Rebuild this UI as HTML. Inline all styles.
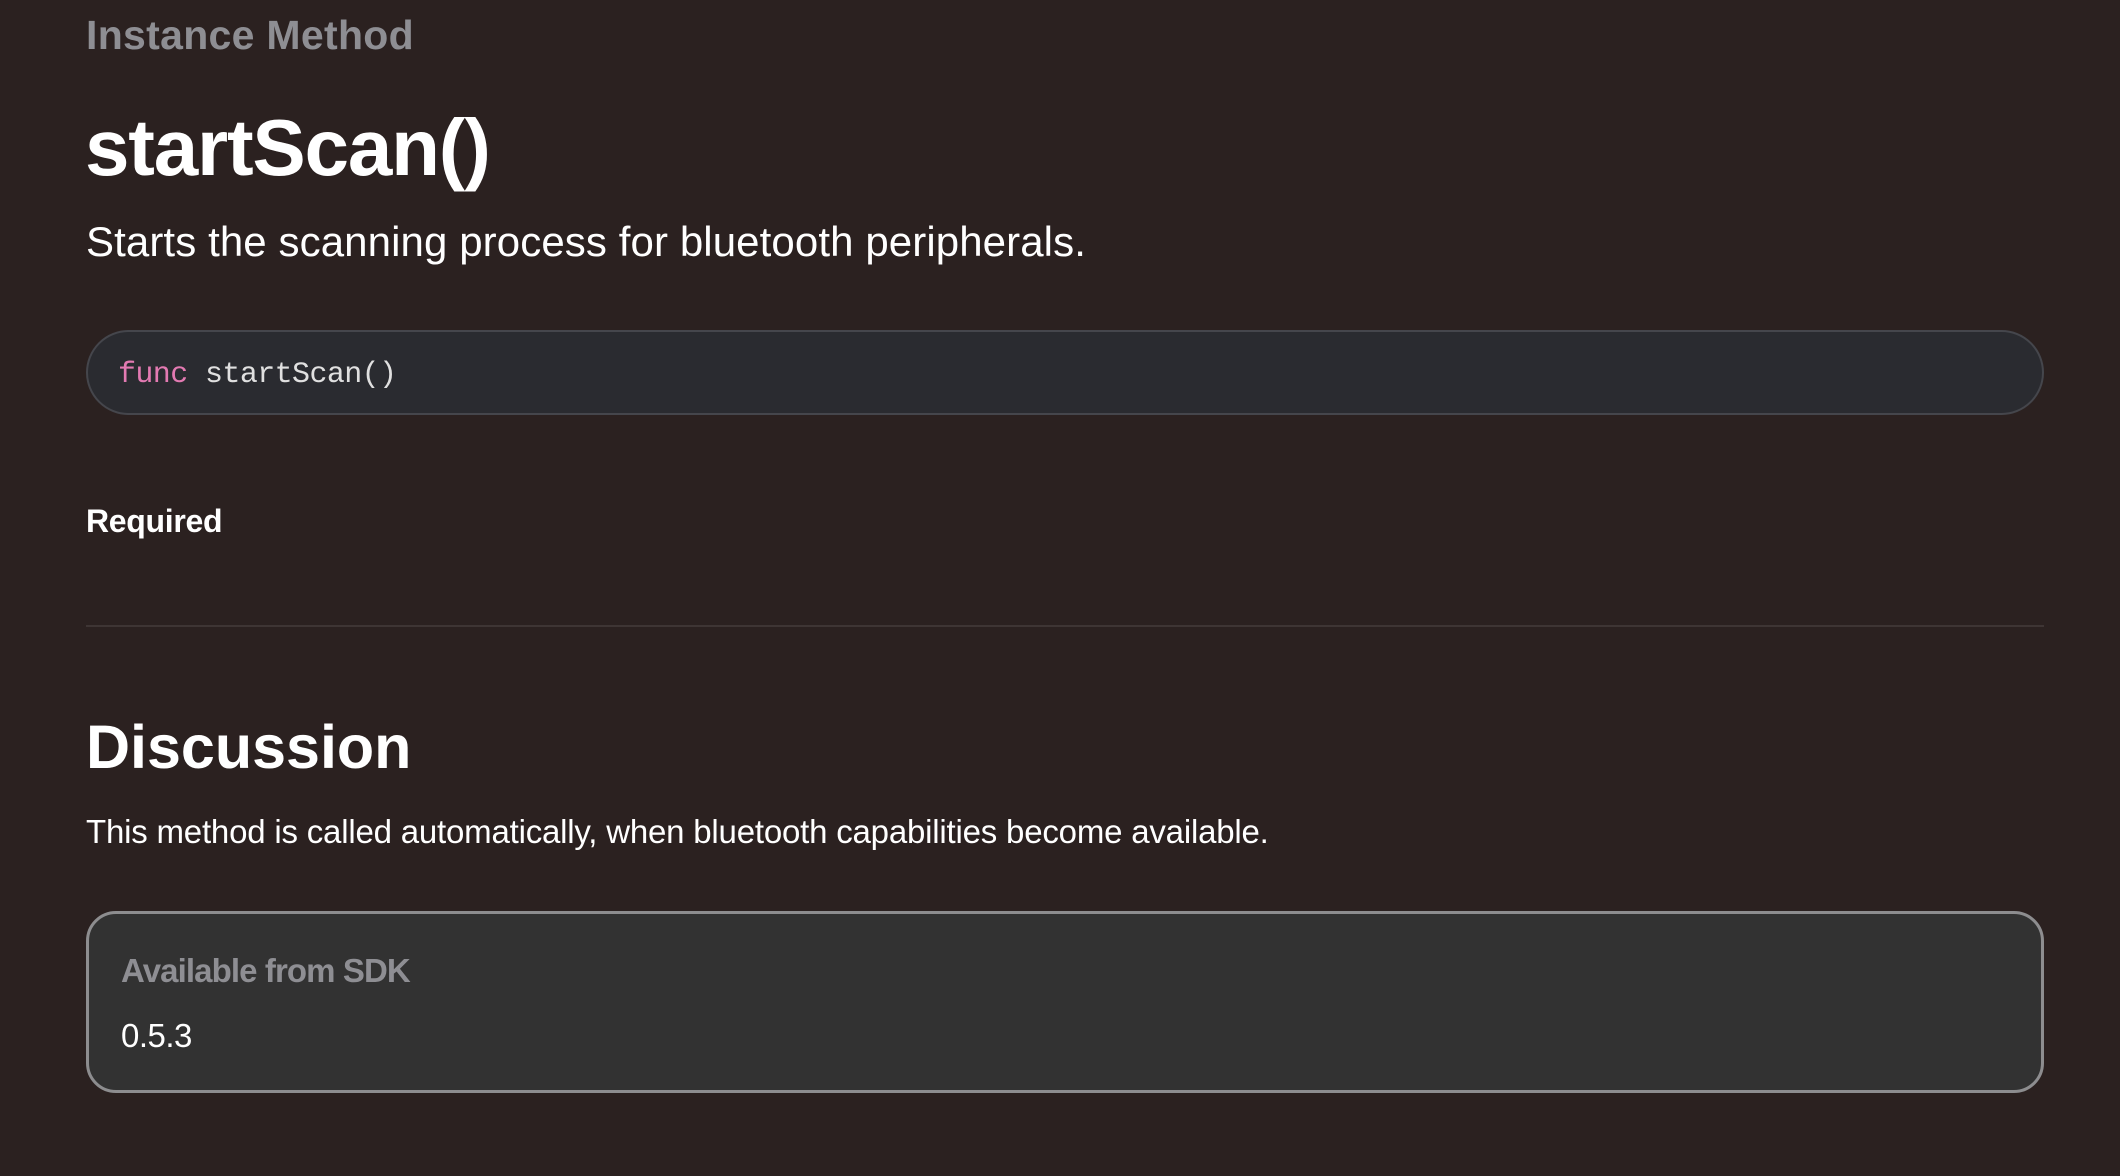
<!DOCTYPE html>
<html><head><meta charset="utf-8"><style>
html,body{margin:0;padding:0;width:2120px;height:1176px;background:#2b2120;overflow:hidden;font-family:"Liberation Sans",sans-serif;}
.a{position:absolute;white-space:nowrap;line-height:1;}
</style></head><body>
<div class="a" style="left:86px;top:15px;font-size:41px;font-weight:bold;color:#8e8e93;letter-spacing:0.3px;">Instance Method</div>
<div class="a" style="left:85px;top:108px;font-size:80px;font-weight:bold;color:#fff;letter-spacing:-1.2px;">startScan()</div>
<div class="a" style="left:86px;top:221px;font-size:42px;color:#fff;letter-spacing:0.1px;">Starts the scanning process for bluetooth peripherals.</div>
<div style="position:absolute;left:86px;top:330px;width:1958px;height:85px;box-sizing:border-box;border:2px solid #45464c;border-radius:43px;background:#2a2b30;"></div>
<div class="a" style="left:118px;top:360px;font-family:'Liberation Mono',monospace;font-size:30px;color:#e0e0e0;letter-spacing:-0.6px;"><span style="color:#e37ab2">func</span> startScan()</div>
<div class="a" style="left:86px;top:505px;font-size:32px;font-weight:bold;color:#fff;letter-spacing:-0.3px;">Required</div>
<div style="position:absolute;left:86px;top:625px;width:1958px;height:2px;background:#3e3534;"></div>
<div class="a" style="left:86px;top:717px;font-size:61px;font-weight:bold;color:#fff;">Discussion</div>
<div class="a" style="left:86px;top:815px;font-size:33px;color:#fff;letter-spacing:-0.2px;">This method is called automatically, when bluetooth capabilities become available.</div>
<div style="position:absolute;left:86px;top:911px;width:1958px;height:182px;box-sizing:border-box;border:3px solid #8d8d8f;border-radius:30px;background:#323232;"></div>
<div class="a" style="left:121px;top:954px;font-size:33px;font-weight:bold;color:#8e8e93;letter-spacing:-0.9px;">Available from SDK</div>
<div class="a" style="left:121px;top:1019px;font-size:33px;color:#fff;letter-spacing:-0.5px;">0.5.3</div>
</body></html>
